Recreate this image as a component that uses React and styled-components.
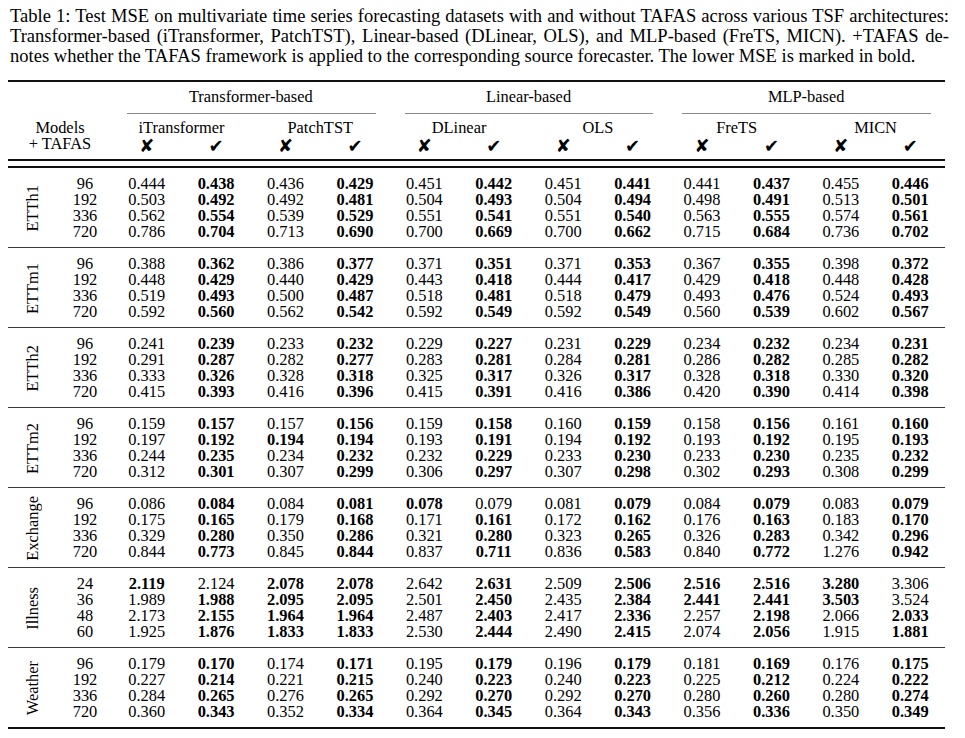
import React from "react";
import styled, { createGlobalStyle } from "styled-components";

const Global = createGlobalStyle`
  html, body { margin: 0; padding: 0; background: #fff; }
  body { font-family: "Liberation Serif", "Times New Roman", serif; color: #000; }
`;

const Page = styled.div`
  width: 965px;
  padding-top: 6px;
  box-sizing: border-box;
`;

const Caption = styled.div`
  margin: 0 16px 0 10px;
  font-size: 18.55px;
  line-height: 20px;
`;

const CapLine = styled.div`
  white-space: nowrap;
  text-align: ${(p) => (p.$last ? "left" : "justify")};
  text-align-last: ${(p) => (p.$last ? "left" : "justify")};
`;

const Table = styled.div`
  margin: 14px 20px 0 8px;
  font-size: 16.4px;
  line-height: 16px;
`;

const Rule = styled.div`
  height: 2px;
  background: #111;
  margin-top: ${(p) => p.$mt || 0}px;
`;

const Grid = styled.div`
  display: grid;
  grid-template-columns: 50px 54px repeat(12, 1fr);
`;

const HeadRow = styled(Grid)`
  padding-top: ${(p) => p.$pt}px;
`;

const Cell = styled.div`
  grid-column: ${(p) => p.$col};
  grid-row: ${(p) => p.$row || "auto"};
  text-align: center;
  white-space: nowrap;
  font-weight: ${(p) => (p.$bold ? 700 : 400)};
`;

const CMid = styled.div`
  grid-column: ${(p) => p.$col};
  height: 1px;
  margin: 0 14px 0 15px;
  background: #8a8a8a;
`;

const Mark = styled.div`
  grid-column: ${(p) => p.$col};
  grid-row: 2;
  text-align: center;
  font-family: "DejaVu Sans", sans-serif;
  font-size: 18px;
  line-height: 16px;
  padding-top: 2px;
`;

const Group = styled(Grid)`
  grid-template-rows: repeat(4, 16px);
  padding: 8px 0 7px;
  border-bottom: ${(p) => (p.$last ? "none" : "1px solid #3a3a3a")};
`;

const Label = styled.div`
  grid-column: 1;
  grid-row: 1 / 5;
  display: flex;
  align-items: center;
  justify-content: center;
`;

const Vertical = styled.span`
  writing-mode: vertical-rl;
  transform: rotate(180deg);
  white-space: nowrap;
  line-height: 16px;
`;

const families = [
  { name: "Transformer-based", col: "3 / 7", models: ["iTransformer", "PatchTST"] },
  { name: "Linear-based", col: "7 / 11", models: ["DLinear", "OLS"] },
  { name: "MLP-based", col: "11 / 15", models: ["FreTS", "MICN"] },
];

const groups = [
  ["ETTh1", [
    ["96", "0.444 *0.438 0.436 *0.429 0.451 *0.442 0.451 *0.441 0.441 *0.437 0.455 *0.446"],
    ["192", "0.503 *0.492 0.492 *0.481 0.504 *0.493 0.504 *0.494 0.498 *0.491 0.513 *0.501"],
    ["336", "0.562 *0.554 0.539 *0.529 0.551 *0.541 0.551 *0.540 0.563 *0.555 0.574 *0.561"],
    ["720", "0.786 *0.704 0.713 *0.690 0.700 *0.669 0.700 *0.662 0.715 *0.684 0.736 *0.702"],
  ]],
  ["ETTm1", [
    ["96", "0.388 *0.362 0.386 *0.377 0.371 *0.351 0.371 *0.353 0.367 *0.355 0.398 *0.372"],
    ["192", "0.448 *0.429 0.440 *0.429 0.443 *0.418 0.444 *0.417 0.429 *0.418 0.448 *0.428"],
    ["336", "0.519 *0.493 0.500 *0.487 0.518 *0.481 0.518 *0.479 0.493 *0.476 0.524 *0.493"],
    ["720", "0.592 *0.560 0.562 *0.542 0.592 *0.549 0.592 *0.549 0.560 *0.539 0.602 *0.567"],
  ]],
  ["ETTh2", [
    ["96", "0.241 *0.239 0.233 *0.232 0.229 *0.227 0.231 *0.229 0.234 *0.232 0.234 *0.231"],
    ["192", "0.291 *0.287 0.282 *0.277 0.283 *0.281 0.284 *0.281 0.286 *0.282 0.285 *0.282"],
    ["336", "0.333 *0.326 0.328 *0.318 0.325 *0.317 0.326 *0.317 0.328 *0.318 0.330 *0.320"],
    ["720", "0.415 *0.393 0.416 *0.396 0.415 *0.391 0.416 *0.386 0.420 *0.390 0.414 *0.398"],
  ]],
  ["ETTm2", [
    ["96", "0.159 *0.157 0.157 *0.156 0.159 *0.158 0.160 *0.159 0.158 *0.156 0.161 *0.160"],
    ["192", "0.197 *0.192 *0.194 *0.194 0.193 *0.191 0.194 *0.192 0.193 *0.192 0.195 *0.193"],
    ["336", "0.244 *0.235 0.234 *0.232 0.232 *0.229 0.233 *0.230 0.233 *0.230 0.235 *0.232"],
    ["720", "0.312 *0.301 0.307 *0.299 0.306 *0.297 0.307 *0.298 0.302 *0.293 0.308 *0.299"],
  ]],
  ["Exchange", [
    ["96", "0.086 *0.084 0.084 *0.081 *0.078 0.079 0.081 *0.079 0.084 *0.079 0.083 *0.079"],
    ["192", "0.175 *0.165 0.179 *0.168 0.171 *0.161 0.172 *0.162 0.176 *0.163 0.183 *0.170"],
    ["336", "0.329 *0.280 0.350 *0.286 0.321 *0.280 0.323 *0.265 0.326 *0.283 0.342 *0.296"],
    ["720", "0.844 *0.773 0.845 *0.844 0.837 *0.711 0.836 *0.583 0.840 *0.772 1.276 *0.942"],
  ]],
  ["Illness", [
    ["24", "*2.119 2.124 *2.078 *2.078 2.642 *2.631 2.509 *2.506 *2.516 *2.516 *3.280 3.306"],
    ["36", "1.989 *1.988 *2.095 *2.095 2.501 *2.450 2.435 *2.384 *2.441 *2.441 *3.503 3.524"],
    ["48", "2.173 *2.155 *1.964 *1.964 2.487 *2.403 2.417 *2.336 2.257 *2.198 2.066 *2.033"],
    ["60", "1.925 *1.876 *1.833 *1.833 2.530 *2.444 2.490 *2.415 2.074 *2.056 1.915 *1.881"],
  ]],
  ["Weather", [
    ["96", "0.179 *0.170 0.174 *0.171 0.195 *0.179 0.196 *0.179 0.181 *0.169 0.176 *0.175"],
    ["192", "0.227 *0.214 0.221 *0.215 0.240 *0.223 0.240 *0.223 0.225 *0.212 0.224 *0.222"],
    ["336", "0.284 *0.265 0.276 *0.265 0.292 *0.270 0.292 *0.270 0.280 *0.260 0.280 *0.274"],
    ["720", "0.360 *0.343 0.352 *0.334 0.364 *0.345 0.364 *0.343 0.356 *0.336 0.350 *0.349"],
  ]],
];

export default function App() {
  return (
    <Page>
      <Global />
      <Caption>
        <CapLine>
          Table 1: Test MSE on multivariate time series forecasting datasets with and without TAFAS across various TSF architectures:
        </CapLine>
        <CapLine>
          Transformer-based (iTransformer, PatchTST), Linear-based (DLinear, OLS), and MLP-based (FreTS, MICN). +TAFAS de-
        </CapLine>
        <CapLine $last>
          notes whether the TAFAS framework is applied to the corresponding source forecaster. The lower MSE is marked in bold.
        </CapLine>
      </Caption>
      <Table>
        <Rule />
        <HeadRow $pt={7}>
          {families.map((f) => (
            <Cell key={f.name} $col={f.col}>{f.name}</Cell>
          ))}
        </HeadRow>
        <HeadRow $pt={8}>
          {families.map((f) => (
            <CMid key={f.name} $col={f.col} />
          ))}
        </HeadRow>
        <HeadRow $pt={6}>
          <Cell $col="1 / 3" $row={1}>Models</Cell>
          <Cell $col="1 / 3" $row={2}>+ TAFAS</Cell>
          {families.flatMap((f) => f.models).map((m, i) => (
            <Cell key={m} $col={`${3 + i * 2} / ${5 + i * 2}`} $row={1}>{m}</Cell>
          ))}
          {Array.from({ length: 12 }).map((_, i) => (
            <Mark key={i} $col={3 + i}>{i % 2 === 0 ? "\u2718" : "\u2714"}</Mark>
          ))}
        </HeadRow>
        <Rule $mt={5} />
        <Rule $mt={5} />
        {groups.map(([name, rows], gi) => (
          <Group key={name} $last={gi === groups.length - 1}>
            <Label>
              <Vertical>{name}</Vertical>
            </Label>
            {rows.map(([h, vals], ri) => (
              <React.Fragment key={h}>
                <Cell $col={2} $row={ri + 1}>{h}</Cell>
                {vals.split(" ").map((v, ci) => (
                  <Cell key={ci} $col={3 + ci} $row={ri + 1} $bold={v.startsWith("*")}>
                    {v.replace("*", "")}
                  </Cell>
                ))}
              </React.Fragment>
            ))}
          </Group>
        ))}
        <Rule />
      </Table>
    </Page>
  );
}
